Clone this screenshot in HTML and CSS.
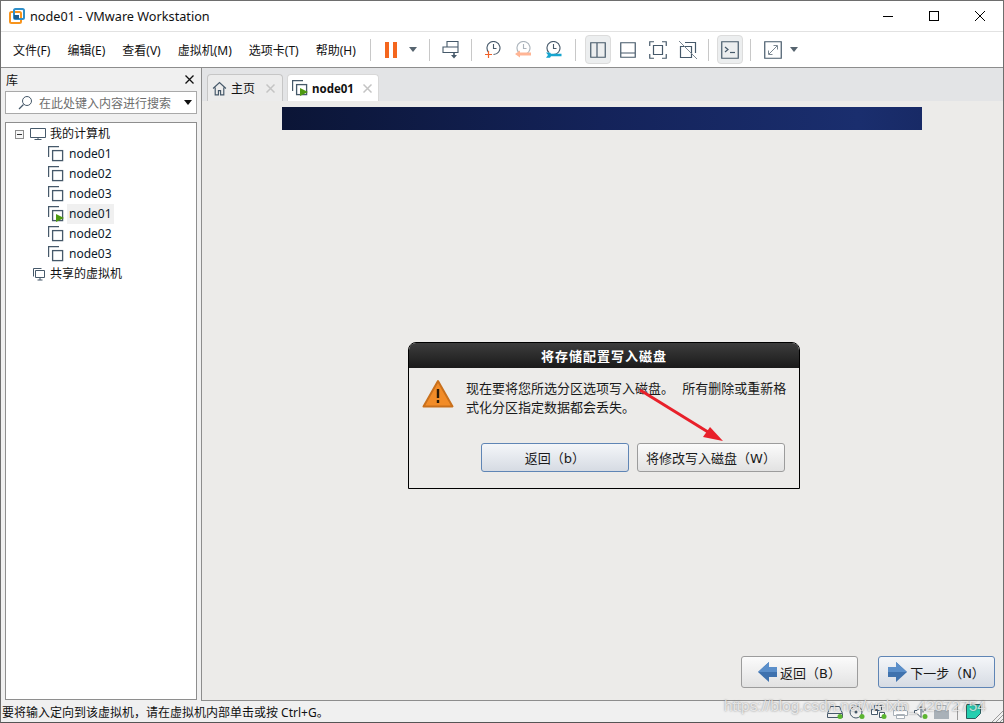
FILE: index.html
```html
<!DOCTYPE html>
<html lang="zh-CN">
<head>
  <meta charset="UTF-8" />
  <title>node01 - VMware Workstation</title>
  <link rel="stylesheet" href="styles.css">
</head>
<body>
  <svg class="defs" width="0" height="0">
    <symbol id="vm" viewBox="0 0 16 16">
      <path d="M.6 11V.6H11" fill="none" stroke="#46596a" stroke-width="1.200"/>
      <rect x="4.600" y="4.600" width="10" height="10" fill="#fff" stroke="#46596a" stroke-width="1.300"/>
    </symbol>
    <symbol id="clock" viewBox="0 0 18 18">
      <path d="M3.800 11.500A6.500 6.500 0 1 1 8.500 13.500M8.500 3v4.500h3" fill="none" stroke="#46596a" stroke-width="1.100"/>
    </symbol>
  </svg>

  <div class="window">
    <header class="titlebar">
      <svg class="logo" width="16" height="16" viewBox="0 0 16 16">
        <rect x="1" y="4" width="11" height="11" rx="1.500" fill="none" stroke="#f7941d" stroke-width="2"/>
        <rect x="5" y="1" width="10" height="10" rx="1.500" fill="none" stroke="#2f8fc9" stroke-width="2"/>
        <rect x="5" y="7" width="5" height="4" fill="#1f5f8f"/>
      </svg>
      <span class="title">node01 - VMware Workstation</span>
      <div class="winbtns">
        <svg width="12" height="12" viewBox="0 0 12 12"><path d="M1 6.500h10" stroke="#000"/></svg>
        <svg width="12" height="12" viewBox="0 0 12 12"><rect x="1.500" y="1.500" width="9" height="9" fill="none" stroke="#000"/></svg>
        <svg width="12" height="12" viewBox="0 0 12 12"><path d="M1 1l10 10M11 1L1 11" stroke="#000"/></svg>
      </div>
    </header>

    <nav class="toolbar">
      <div class="menus">
        <span>文件(F)</span><span>编辑(E)</span><span>查看(V)</span><span>虚拟机(M)</span><span>选项卡(T)</span><span>帮助(H)</span>
      </div>
      <i class="sep sep-first"></i>
      <span class="pause"><b></b><b></b></span>
      <i class="caret"></i>
      <i class="sep"></i>
      <svg class="tool" width="18" height="18" viewBox="0 0 17 18">
        <path d="M4.500.5h11v5.500h-11zM.5 6h15v5.500H.5z" fill="#fff" stroke="#46596a" stroke-width="1.100"/>
        <path d="M11.500 11.500v3" stroke="#46596a" stroke-width="1.600"/><path d="M8.500 14h6l-3 3.500z" fill="#46596a"/>
      </svg>
      <i class="sep sep-clock"></i>
      <div class="clocks">
        <svg width="18" height="18" viewBox="0 0 18 18">
          <use href="#clock"/><path d="M0 13.500h7M3.500 10v7" stroke="#f0622a" stroke-width="1.200"/>
        </svg>
        <svg width="18" height="18" viewBox="0 0 18 18">
          <use href="#clock" opacity=".45"/><path d="M0 13l5-3.500v2h11v3H5v2z" fill="#ffb595"/>
        </svg>
        <svg width="18" height="18" viewBox="0 0 18 18">
          <use href="#clock"/><path d="M1 11.500h4l1 1.300h10.500v2.500H6l-1 1.500H1l2-2.800z" fill="#16a5cf"/>
        </svg>
      </div>
      <i class="sep sep-toggles"></i>
      <span class="toggle on">
        <svg width="16" height="16" viewBox="0 0 16 16"><path d="M.75.75h14.500v14.500H.75zM7 1v14" fill="none" stroke="#46596a" stroke-width="1.200"/></svg>
      </span>
      <span class="toggle">
        <svg width="16" height="16" viewBox="0 0 16 16"><path d="M.75.75h14.500v14.500H.75zM1 11h14" fill="none" stroke="#46596a" stroke-width="1.200"/></svg>
      </span>
      <span class="toggle">
        <svg width="18" height="18" viewBox="0 0 18 18"><path d="M.75 5V.75H5M13 .75h4.250V5M17.250 13v4.250H13M5 17.250H.75V13M4.500 4.500h9v9h-9z" fill="none" stroke="#46596a" stroke-width="1.200"/></svg>
      </span>
      <span class="toggle">
        <svg width="18" height="18" viewBox="0 0 18 18"><path d="M1.500 5.500h11v11h-11zM6 1.500h10.500V12" fill="none" stroke="#46596a" stroke-width="1.200"/><path d="M0 0l18 18" stroke="#7b8791"/></svg>
      </span>
      <i class="sep sep-tight"></i>
      <span class="toggle on">
        <svg width="18" height="18" viewBox="0 0 18 18"><path d="M.75.75h16.500v16.500H.75z" fill="none" stroke="#46596a" stroke-width="1.200"/><path d="M4 6l3 2.500L4 11" fill="none" stroke="#46596a" stroke-width="1.200"/><path d="M9 11.500h5" stroke="#46596a" stroke-width="1.200"/></svg>
      </span>
      <i class="sep sep-fit"></i>
      <svg class="tool" width="18" height="18" viewBox="0 0 18 18">
        <path d="M.75.75h16.500v16.500H.75z" fill="none" stroke="#46596a" stroke-width="1.200"/>
        <path d="M5 13l8-8M9.500 4.500h4v4M4.500 9.500v4h4" fill="none" stroke="#7b8791"/>
      </svg>
      <i class="caret caret-fit"></i>
    </nav>

    <div class="workspace">
      <aside class="library">
        <div class="lib-head"><span>库</span>
          <svg width="9" height="9" viewBox="0 0 9 9"><path d="M.5.5l8 8M8.500.5l-8 8" stroke="#111" stroke-width="1.300"/></svg>
        </div>
        <div class="search">
          <svg width="15" height="15" viewBox="0 0 15 15"><circle cx="9" cy="6" r="4.500" fill="none" stroke="#46596a"/><path d="M5.500 9.500L1 14" stroke="#46596a" stroke-width="1.300"/></svg>
          <span class="search-text">在此处键入内容进行搜索</span>
          <i class="caret caret-dark"></i>
        </div>
        <div class="tree">
          <div class="row">
            <span class="minus"></span>
            <svg width="16" height="14" viewBox="0 0 16 14"><path d="M.5 1.500h15v9H.5zM8 11v2M4.500 12.500h7" fill="#fff" stroke="#46596a"/></svg>
            <span class="label">我的计算机</span>
          </div>
          <div class="row child"><svg width="16" height="16"><use href="#vm"/></svg><span class="name">node01</span></div>
          <div class="row child"><svg width="16" height="16"><use href="#vm"/></svg><span class="name">node02</span></div>
          <div class="row child"><svg width="16" height="16"><use href="#vm"/></svg><span class="name">node03</span></div>
          <div class="row child"><svg width="16" height="16" viewBox="0 0 16 16"><use href="#vm" width="16" height="16"/><path d="M8 8l8 4-8 4z" fill="#4f9a10"/></svg><span class="name selected">node01</span></div>
          <div class="row child"><svg width="16" height="16"><use href="#vm"/></svg><span class="name">node02</span></div>
          <div class="row child"><svg width="16" height="16"><use href="#vm"/></svg><span class="name">node03</span></div>
          <div class="row shared">
            <svg width="14" height="14" viewBox="0 0 14 14"><path d="M1.500 9.500v-8h8" fill="none" stroke="#46596a"/><path d="M3.500 3.500h9v7h-9zM8 11v2M5.500 13h5" fill="#fff" stroke="#46596a"/></svg>
            <span class="label">共享的虚拟机</span>
          </div>
        </div>
      </aside>

      <main class="content">
        <div class="tabs">
          <div class="tab">
            <svg width="15" height="15" viewBox="0 0 14 14"><path d="M1 7l6-5.500L13 7M3 6v7h3V9h2v4h3V6" fill="none" stroke="#46596a" stroke-width="1.100"/></svg>
            <span>主页</span>
            <svg class="tab-x" width="9" height="9" viewBox="0 0 9 9"><path d="M.5.5l8 8M8.500.5l-8 8" stroke="#c4c4c4" stroke-width="1.500"/></svg>
          </div>
          <div class="tab active">
            <svg width="16" height="16" viewBox="0 0 16 16"><use href="#vm" width="16" height="16"/><path d="M8 8l8 4-8 4z" fill="#4f9a10"/></svg>
            <span>node01</span>
            <svg class="tab-x" width="9" height="9" viewBox="0 0 9 9"><path d="M.5.5l8 8M8.500.5l-8 8" stroke="#c4c4c4" stroke-width="1.500"/></svg>
          </div>
        </div>

        <div class="guest">
          <div class="banner"></div>

          <div class="dialog">
            <div class="dialog-title">将存储配置写入磁盘</div>
            <div class="dialog-body">
              <svg class="warn" width="32" height="30" viewBox="0 0 32 30">
                <path d="M16 2L30.500 27.500H1.500z" fill="#f28c28" stroke="#c9701c" stroke-width="2" stroke-linejoin="round"/>
                <path d="M16 10v9" stroke="#2a1a08" stroke-width="2.400"/>
                <path d="M16 21v3" stroke="#2a1a08" stroke-width="2.400"/>
              </svg>
              <p>现在要将您所选分区选项写入磁盘。 所有删除或重新格式化分区指定数据都会丢失。</p>
            </div>
            <div class="dialog-btns">
              <button class="btn focus">返回（b）</button>
              <button class="btn">将修改写入磁盘（W）</button>
            </div>
          </div>

          <div class="footer">
            <button class="btn nav">
              <svg width="19" height="20" viewBox="0 0 19 20"><path d="M0 10L11 0v5h8v10h-8v5z" fill="#3f72ae"/><path d="M11 5h8v5H0L11 0z" fill="#5b8fca"/></svg>
              <span>返回（B）</span>
            </button>
            <button class="btn nav focus">
              <svg width="19" height="20" viewBox="0 0 19 20"><path d="M19 10L8 0v5H0v10h8v5z" fill="#3f72ae"/><path d="M8 5H0v5h19L8 0z" fill="#5b8fca"/></svg>
              <span>下一步（N）</span>
            </button>
          </div>
        </div>
      </main>
    </div>

    <footer class="statusbar">
      <span>要将输入定向到该虚拟机，请在虚拟机内部单击或按 Ctrl+G。</span>
      <div class="devices">
        <span class="dev"><svg width="16" height="14" viewBox="0 0 16 14"><path d="M3.500 1.500h9l3 7v4H.5v-4zM1 8.500h14" fill="none" stroke="#46596a"/><circle cx="13" cy="11.500" r="2.500" fill="#5cb531"/></svg></span>
        <span class="dev"><svg width="16" height="14" viewBox="0 0 16 14"><circle cx="7" cy="7" r="6" fill="none" stroke="#46596a"/><circle cx="7" cy="7" r="1.500" fill="#46596a"/><circle cx="13" cy="11.500" r="2.500" fill="#5cb531"/></svg></span>
        <span class="dev"><svg width="16" height="14" viewBox="0 0 16 14"><path d="M3.500.5h7v5h-7zM.5 4.500h6v5h-6zM8.500 7.500h5v5h-5z" fill="#fff" stroke="#46596a"/><circle cx="13" cy="11.500" r="2.500" fill="#5cb531"/></svg></span>
        <span class="dev"><svg width="15" height="14" viewBox="0 0 15 14"><path d="M3.500 5V1.500h8V5M.5 5.500h14v5H.5zM3.500 9.500h8v4h-8z" fill="#fff" stroke="#a9b1b8"/></svg></span>
        <span class="dev"><svg width="14" height="14" viewBox="0 0 14 14"><path d="M.5 5.500H3l4-4v11l-4-4H.5z" fill="#fff" stroke="#46596a"/><path d="M9 4.500v3M11 3v3" stroke="#46596a"/><circle cx="11" cy="11.500" r="2.500" fill="#5cb531"/></svg></span>
        <span class="dev"><svg width="15" height="14" viewBox="0 0 15 14"><path d="M3 .5h9v5H3z" fill="#eee" stroke="#a9b1b8"/><rect y="5" width="15" height="9" fill="#a9b1b8"/></svg></span>
        <i class="dev-sep"></i>
        <span class="dev"><svg width="15" height="15" viewBox="0 0 15 15"><path d="M.5.5h14v9l-5 5h-9z" fill="#24cfb0" stroke="#2a5c5c"/></svg></span>
      </div>
      <svg class="grip" width="11" height="11" viewBox="0 0 11 11"><path d="M11 0L0 11M11 4l-7 7M11 8l-3 3" stroke="#9a9a9a"/></svg>
    </footer>

    <!-- arrow and watermark sit on top of the screenshot -->
    <svg class="arrow" width="90" height="60" viewBox="0 0 90 60">
      <path d="M2 5L70 47" stroke="#e8202a" stroke-width="3"/>
      <path d="M85 56L72 42L65 52z" fill="#e8202a"/>
    </svg>
    <div class="watermark">https://blog.csdn.net/weixin_42072754</div>
  </div>
</body>
</html>
```

FILE: styles.css
```css
* {
  box-sizing: border-box;
}

body {
  margin: 0;
  font-family: "Noto Sans", "Noto Sans CJK SC", sans-serif;
  font-size: 12px;
  color: #111;
}

.defs {
  position: absolute;
}

.window {
  position: relative;
  width: 1004px;
  height: 723px;
  display: flex;
  flex-direction: column;
  overflow: hidden;
  background: #f0f0f0;
  border: 1px solid #6e6e6e;
  border-bottom-color: #555;
}

/* title bar */
.titlebar {
  height: 30px;
  flex: none;
  display: flex;
  align-items: center;
  padding: 0 0 1px 8px;
  background: #fff;
}

.title {
  margin-left: 5px;
  font-size: 12.700px;
  white-space: nowrap;
}

.winbtns {
  margin-left: auto;
  display: flex;
  gap: 34px;
  padding-right: 17px;
  align-items: center;
}

/* toolbar */
.toolbar {
  height: 37px;
  flex: none;
  display: flex;
  align-items: center;
  background: #fff;
  border-top: 1px solid #e2e2e2;
  border-bottom: 1px solid #8d8d8d;
  padding-left: 12px;
}

.menus {
  display: flex;
  gap: 17px;
  width: 357px;
  white-space: nowrap;
}

.sep {
  width: 1px;
  height: 22px;
  flex: none;
  background: #c8c8c8;
  margin: 0 12px;
}

.sep-first {
  margin-left: 0;
  margin-right: 14px;
}

.sep-clock {
  margin: 0 13px 0 11px;
}

.sep-toggles {
  margin: 0 9px 0 12px;
}

.sep-tight {
  margin: 0 8px 0 7px;
}

.sep-fit {
  margin: 0 13px 0 7px;
}

.pause {
  display: flex;
  gap: 4px;
}

.pause b {
  width: 4px;
  height: 16px;
  background: #f4661e;
}

.caret {
  width: 0;
  height: 0;
  border: 4px solid transparent;
  border-top: 5px solid #56646f;
  border-bottom: 0;
  margin-left: 12px;
}

.caret-fit {
  margin-left: 8px;
}

.caret-dark {
  border-top-color: #111;
  margin-left: auto;
}

.tool {
  flex: none;
}

.clocks {
  display: flex;
  gap: 12px;
}

.toggle {
  width: 26px;
  height: 29px;
  flex: none;
  display: flex;
  align-items: center;
  justify-content: center;
  border: 1px solid transparent;
  border-radius: 4px;
}

.toggle + .toggle {
  margin-left: 4px;
}

.toggle.on {
  background: #eceeef;
  border-color: #dcdcdc;
}

/* main area */
.workspace {
  flex: 1;
  display: flex;
  min-height: 0;
}

.library {
  width: 200px;
  flex: none;
  display: flex;
  flex-direction: column;
  padding: 0 4px 1px 4px;
}

.lib-head {
  height: 23px;
  display: flex;
  align-items: center;
  justify-content: space-between;
  padding: 0 3px 0 1px;
}

.search {
  height: 23px;
  display: flex;
  align-items: center;
  background: #fff;
  border: 1px solid #a9a9a9;
  padding: 0 4px 0 12px;
  color: #6d6d6d;
}

.search-text {
  margin-left: 6px;
}

.tree {
  flex: 1;
  margin-top: 8px;
  background: #fff;
  border: 1px solid #8e8e8e;
  padding-top: 1px;
}

.row {
  height: 20px;
  display: flex;
  align-items: center;
  white-space: nowrap;
}

.row:first-child {
  padding-left: 9px;
}

.minus {
  position: relative;
  width: 9px;
  height: 9px;
  border: 1px solid #8c8c8c;
  background: #f7f7f7;
  margin-right: 6px;
}

.minus::after {
  content: "";
  position: absolute;
  left: 1px;
  top: 3px;
  width: 5px;
  height: 1px;
  background: #333;
}

.label {
  margin-left: 4px;
  padding-bottom: 2px;
}

.child {
  padding-left: 42px;
}

.name {
  margin-left: 3px;
  padding: 0 2px;
  line-height: 20px;
  color: #0c1a2c;
}

.selected {
  background: #f0f0f0;
}

.shared {
  padding-left: 26px;
}

.content {
  flex: 1;
  display: flex;
  flex-direction: column;
  min-width: 0;
  border-left: 1px solid #8d8d8d;
  border-bottom: 1px solid #8d8d8d;
}

.tabs {
  height: 33px;
  flex: none;
  display: flex;
  align-items: flex-end;
  gap: 4px;
  padding-left: 5px;
  background: #e3e4e6;
}

.tab {
  height: 27px;
  width: 76px;
  display: flex;
  align-items: center;
  padding: 0 7px 0 4px;
  gap: 4px;
  background: #ececec;
  border: 1px solid #c6c6c6;
  border-bottom: 0;
  border-radius: 4px 4px 0 0;
}

.tab.active {
  width: 92px;
  padding-right: 6px;
  background: #fff;
  font-size: 11.500px;
  font-weight: 700;
  border-color: #d8d8d8;
}

.tab-x {
  margin-left: auto;
}

/* guest screen */
.guest {
  flex: 1;
  display: flex;
  flex-direction: column;
  min-height: 0;
  background: #ecebe9;
  font-family: "DejaVu Sans", "Noto Sans CJK SC", sans-serif;
  color: #1a1a1a;
}

.banner {
  width: 640px;
  height: 23px;
  flex: none;
  margin: 6px 0 0 80px;
  background: linear-gradient(90deg, #0b1536, #14235a 50%, #1a2e6e 90%, #182a66);
}

.dialog {
  width: 392px;
  height: 147px;
  flex: none;
  margin: 212px 0 0 206px;
  display: flex;
  flex-direction: column;
  border: 1px solid #000;
  border-radius: 8px 8px 0 0;
  overflow: hidden;
}

.dialog-title {
  height: 25px;
  flex: none;
  display: flex;
  align-items: center;
  justify-content: center;
  background: linear-gradient(#3d3d3d, #1a1a1a);
  color: #fff;
  font-size: 13px;
  font-weight: 700;
  letter-spacing: 1px;
}

.dialog-body {
  display: flex;
  padding: 11px 8px 0 13px;
}

.warn {
  flex: none;
}

.dialog-body p {
  margin: 0 0 0 12px;
  font-size: 13px;
  line-height: 19px;
  word-spacing: 4px;
}

.dialog-btns {
  margin-top: 26px;
  display: flex;
  justify-content: flex-end;
  gap: 8px;
  padding-right: 14px;
}

.btn {
  width: 148px;
  height: 29px;
  padding: 0;
  font-family: inherit;
  font-size: 13px;
  color: #1a1a1a;
  border: 1px solid #9c9c9c;
  border-radius: 3px;
  background: linear-gradient(#fbfbfb, #e2e2e2);
}

.btn.focus {
  border-color: #5f85b5;
  background: linear-gradient(#f4f6f9, #d6dbe3);
}

.footer {
  margin-top: auto;
  display: flex;
  justify-content: flex-end;
  gap: 20px;
  padding: 0 8px 12px 0;
}

.nav {
  width: 117px;
  height: 32px;
  display: flex;
  align-items: center;
  justify-content: center;
  gap: 3px;
}

/* status bar */
.statusbar {
  position: relative;
  height: 21px;
  flex: none;
  display: flex;
  align-items: center;
  padding-left: 1px;
  white-space: nowrap;
}

.devices {
  margin-left: auto;
  margin-right: 22px;
  display: flex;
  align-items: center;
  gap: 6px;
}

.dev {
  display: flex;
}

.dev-sep {
  width: 1px;
  height: 16px;
  background: #9a9a9a;
  margin: 0 2px;
}

.grip {
  position: absolute;
  right: 0;
  bottom: 0;
}

/* overlays */
.arrow {
  position: absolute;
  left: 637px;
  top: 384px;
}

.watermark {
  position: absolute;
  left: 723px;
  top: 696px;
  font-family: "Liberation Sans", sans-serif;
  font-size: 15.400px;
  color: rgba(255, 255, 255, 0.7);
  text-shadow: 0 0 2px rgba(70, 70, 70, 0.7);
  white-space: nowrap;
}
```
